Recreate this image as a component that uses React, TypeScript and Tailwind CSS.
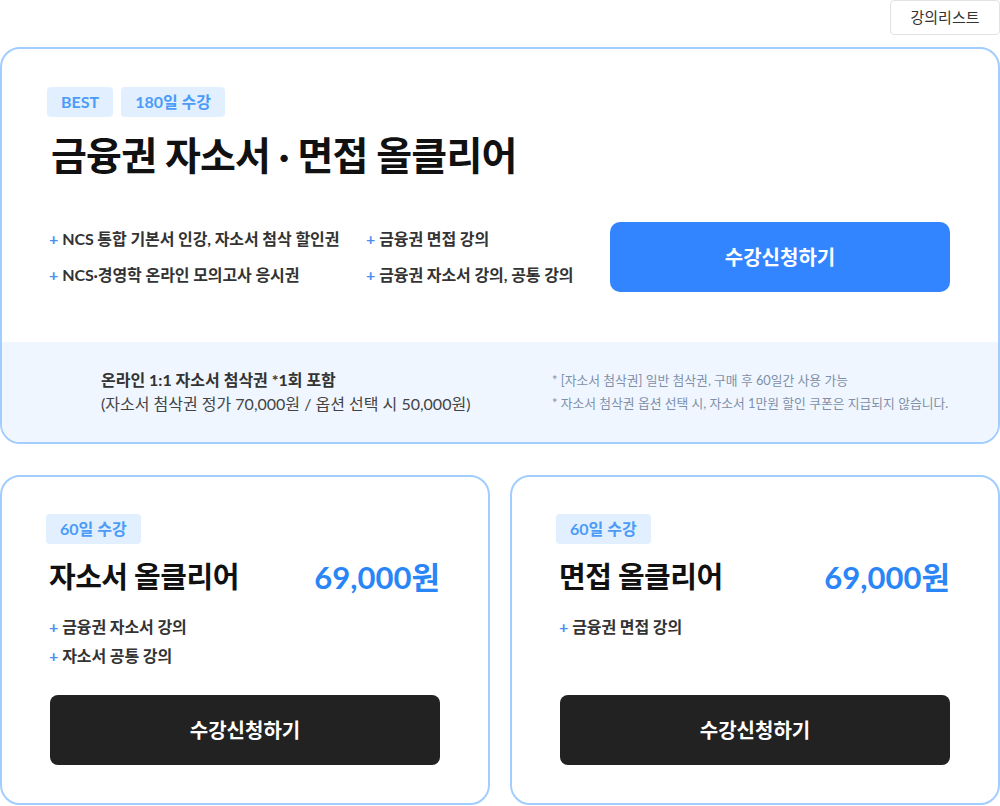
import React from "react";

const font = { fontFamily: 'Lato, "Noto Sans CJK KR", sans-serif' };

function Badge({ children }: { children: React.ReactNode }) {
  return (
    <span className="inline-flex h-[30px] items-center rounded-[4px] bg-[#e1efff] px-[14px] text-[16px] font-bold text-[#4b9bf7]">
      {children}
    </span>
  );
}

function Feature({ children }: { children: React.ReactNode }) {
  return (
    <div className="flex h-[24px] items-center text-[16px] font-bold tracking-[-0.1px] text-[#333]">
      <span className="mr-[4px] text-[#4a8ff0]">+</span>
      {children}
    </div>
  );
}

function SmallCard({ title, features }: { title: string; features: string[] }) {
  return (
    <div className="flex h-[330px] flex-col rounded-[20px] border-2 border-[#a2cdff] bg-white px-[44px] pt-[37px] pb-[38px]">
      <div>
        <Badge>60일 수강</Badge>
      </div>
      <div className="mt-[11px] flex h-[44px] items-center justify-between pr-[4px]">
        <span className="pl-[3px] text-[29px] font-bold tracking-[-0.5px] text-[#111]">{title}</span>
        <span className="text-[31px] font-bold text-[#2a85f6]">69,000원</span>
      </div>
      <div className="mt-[16px] flex flex-col gap-[5px] pl-[3px]">
        {features.map((f) => (
          <Feature key={f}>{f}</Feature>
        ))}
      </div>
      <button className="mt-auto ml-[4px] mr-[4px] h-[70px] rounded-[8px] bg-[#222] text-[20px] font-bold text-white">
        수강신청하기
      </button>
    </div>
  );
}

export default function App() {
  return (
    <div className="w-[1000px] bg-white" style={font}>
      <div className="flex justify-end">
        <button className="h-[35px] w-[110px] rounded-[4px] border border-[#e2e2e2] text-[15px] text-[#333]">
          강의리스트
        </button>
      </div>
      <div className="mt-[12px] overflow-hidden rounded-[20px] border-2 border-[#a2cdff] bg-white">
        <div className="h-[293px] px-[45px] pt-[38px]">
          <div className="flex gap-[8px]">
            <Badge>BEST</Badge>
            <Badge>180일 수강</Badge>
          </div>
          <h1 className="mt-[14px] pl-[4px] text-[39px] font-bold leading-[48px] tracking-[-0.8px] text-[#111]">
            금융권 자소서 · 면접 올클리어
          </h1>
          <div className="mt-[43px] flex items-center justify-between pr-[3px]">
            <div className="grid grid-cols-[317px_auto] gap-y-[12px] pl-[2px]">
              <Feature>NCS 통합 기본서 인강, 자소서 첨삭 할인권</Feature>
              <Feature>금융권 면접 강의</Feature>
              <Feature>NCS·경영학 온라인 모의고사 응시권</Feature>
              <Feature>금융권 자소서 강의, 공통 강의</Feature>
            </div>
            <button className="h-[70px] w-[340px] rounded-[10px] bg-[#3385ff] text-[20px] font-bold text-white">
              수강신청하기
            </button>
          </div>
        </div>
        <div className="flex h-[100px] items-center bg-[#eff6ff] pl-[99px]">
          <div className="w-[451px]">
            <div className="text-[16px] font-bold text-[#333]">온라인 1:1 자소서 첨삭권 *1회 포함</div>
            <div className="text-[16px] text-[#444]">(자소서 첨삭권 정가 70,000원 / 옵션 선택 시 50,000원)</div>
          </div>
          <div className="flex flex-col gap-[4px] text-[12.8px] text-[#7f8fa8]">
            <div>* [자소서 첨삭권] 일반 첨삭권, 구매 후 60일간 사용 가능</div>
            <div>* 자소서 첨삭권 옵션 선택 시, 자소서 1만원 할인 쿠폰은 지급되지 않습니다.</div>
          </div>
        </div>
      </div>
      <div className="mt-[31px] grid grid-cols-2 gap-[20px]">
        <SmallCard title="자소서 올클리어" features={["금융권 자소서 강의", "자소서 공통 강의"]} />
        <SmallCard title="면접 올클리어" features={["금융권 면접 강의"]} />
      </div>
    </div>
  );
}
